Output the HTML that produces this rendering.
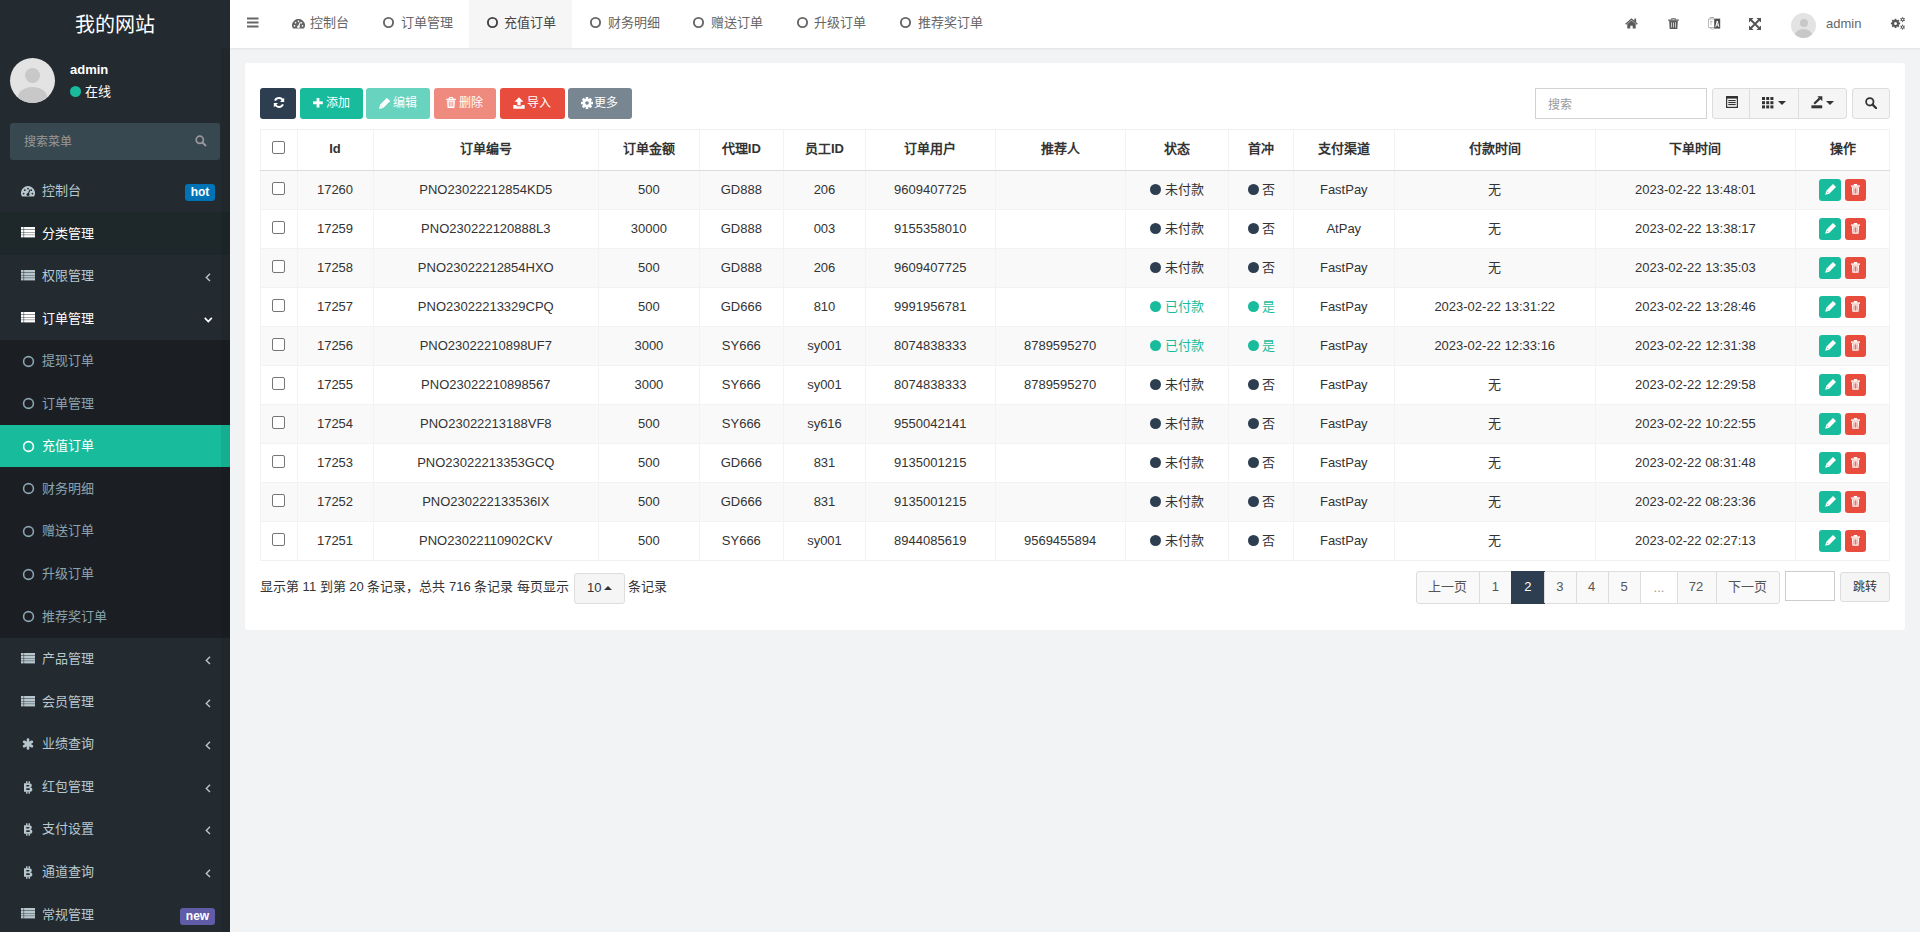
<!DOCTYPE html><html lang="zh-CN"><head><meta charset="utf-8"><style>
*{box-sizing:border-box;margin:0;padding:0}
html,body{width:1920px;height:932px;overflow:hidden}
body{background:#f2f3f5;font-family:"Liberation Sans",sans-serif;font-size:13px;color:#333;position:relative}
.abs{position:absolute}
#side{position:absolute;left:0;top:0;width:230px;height:932px;background:#232b31;overflow:hidden}
#logo{position:absolute;left:0;top:1.5px;width:230px;height:48px;color:#fff;font-size:20px;text-align:center;line-height:46px}
.mi{position:absolute;left:0;width:230px;height:42.56px;font-size:13px}
.mi .tx{position:absolute;left:42px;top:11.5px;line-height:20px;white-space:nowrap}
.badge{height:17px;border-radius:3px;color:#fff;font-size:12px;font-weight:bold;text-align:center;line-height:17px}
#hdr{position:absolute;left:230px;top:0;width:1690px;height:48px;background:#fff;box-shadow:0 1px 2px rgba(0,0,0,.08)}
#panel{position:absolute;left:245px;top:63px;width:1660px;height:567px;background:#fff;border-radius:3px}
.htx{position:absolute;top:14px;font-size:13px;color:#666;line-height:18px;white-space:nowrap}
.btn{position:absolute;top:88px;height:31px;border-radius:3px;color:#fff;font-size:13px;line-height:30px}
.bt{position:absolute;top:6px;line-height:18px;white-space:nowrap;font-size:12px;font-weight:500}
.gbtn{top:88px;height:31px;border:1px solid #ddd;background:#f5f5f5}
.th{position:absolute;top:139px;height:20px;line-height:20px;text-align:center;font-weight:bold;font-size:13px;color:#333;white-space:nowrap}
.td{position:absolute;height:39px;line-height:39px;text-align:center;font-size:13px;color:#333;white-space:nowrap}
.dot{width:11px;height:11px;border-radius:50%}
.ab{width:21.5px;height:21.6px;border-radius:3px}
.pgb{top:571px;height:32.5px;font-size:13px;color:#555;text-align:center;line-height:31px}

</style></head><body><div id="side"><div id="logo">我的网站</div><div class="abs" style="left:10px;top:58px;width:45px;height:45px;border-radius:50%;background:#e3e3e3;overflow:hidden"><div class="abs" style="left:15px;top:10px;width:15px;height:15px;border-radius:50%;background:#c8c8c8"></div><div class="abs" style="left:8px;top:29px;width:29px;height:20px;border-radius:50%;background:#c8c8c8"></div></div><div class="abs" style="left:70px;top:61.8px;font-size:13px;font-weight:bold;color:#fff;line-height:16px">admin</div><div class="abs" style="left:70px;top:86px;width:11px;height:11px;border-radius:50%;background:#18bc9c"></div><div class="abs" style="left:84.5px;top:83px;font-size:13px;color:#fff;line-height:18px">在线</div><div class="abs" style="left:10px;top:123px;width:210px;height:37px;border-radius:3px;background:#374850"></div><div class="abs" style="left:24px;top:133.3px;font-size:12px;color:#999;line-height:18px">搜索菜单</div><svg class="abs" style="left:195px;top:135px" width="12" height="12" viewBox="0 0 12 12"><circle cx="4.8" cy="4.8" r="3.6" fill="none" stroke="#999" stroke-width="1.7"/><path d="M7.5 7.5 L11 11" stroke="#999" stroke-width="2"/></svg><div class="mi" style="top:169.50px;background:transparent;color:#b8c7ce"><svg class="abs" style="left:21px;top:16.8px" width="14" height="11" viewBox="0 0 14 11"><path d="M0.94 10.5 A7 7 0 1 1 13.06 10.5 Z" fill="#b8c7ce"/><circle cx="7" cy="8.6" r="1.5" fill="#232b31"/><path d="M7 8.6 L9 3.6" stroke="#232b31" stroke-width="1.2"/><circle cx="2.6" cy="7.6" r="0.9" fill="#232b31"/><circle cx="11.4" cy="7.6" r="0.9" fill="#232b31"/><circle cx="3.8" cy="4.2" r="0.9" fill="#232b31"/><circle cx="7" cy="2.6" r="0.9" fill="#232b31"/><circle cx="10.2" cy="4.2" r="0.9" fill="#232b31"/></svg><div class="tx">控制台</div><div class="abs badge" style="left:185px;top:14.2px;width:30px;background:#0073b7">hot</div></div><div class="mi" style="top:212.06px;background:#1e272a;color:#fff"><svg class="abs" style="left:21px;top:15.3px" width="14" height="11" viewBox="0 0 14 11"><rect x="0" y="0.00" width="2.6" height="2.3" fill="#fff"/><rect x="3.1" y="0.00" width="10.9" height="2.3" fill="#fff"/><rect x="0" y="2.70" width="2.6" height="2.3" fill="#fff"/><rect x="3.1" y="2.70" width="10.9" height="2.3" fill="#fff"/><rect x="0" y="5.40" width="2.6" height="2.3" fill="#fff"/><rect x="3.1" y="5.40" width="10.9" height="2.3" fill="#fff"/><rect x="0" y="8.10" width="2.6" height="2.3" fill="#fff"/><rect x="3.1" y="8.10" width="10.9" height="2.3" fill="#fff"/></svg><div class="tx">分类管理</div></div><div class="mi" style="top:254.62px;background:transparent;color:#b8c7ce"><svg class="abs" style="left:21px;top:15.3px" width="14" height="11" viewBox="0 0 14 11"><rect x="0" y="0.00" width="2.6" height="2.3" fill="#b8c7ce"/><rect x="3.1" y="0.00" width="10.9" height="2.3" fill="#b8c7ce"/><rect x="0" y="2.70" width="2.6" height="2.3" fill="#b8c7ce"/><rect x="3.1" y="2.70" width="10.9" height="2.3" fill="#b8c7ce"/><rect x="0" y="5.40" width="2.6" height="2.3" fill="#b8c7ce"/><rect x="3.1" y="5.40" width="10.9" height="2.3" fill="#b8c7ce"/><rect x="0" y="8.10" width="2.6" height="2.3" fill="#b8c7ce"/><rect x="3.1" y="8.10" width="10.9" height="2.3" fill="#b8c7ce"/></svg><div class="tx">权限管理</div><svg class="abs" style="left:204.8px;top:18.5px" width="6" height="9"><path d="M5 0.8 L1.3 4.4 L5 8" fill="none" stroke="#b8c7ce" stroke-width="1.4"/></svg></div><div class="mi" style="top:297.18px;background:transparent;color:#fff"><svg class="abs" style="left:21px;top:15.3px" width="14" height="11" viewBox="0 0 14 11"><rect x="0" y="0.00" width="2.6" height="2.3" fill="#fff"/><rect x="3.1" y="0.00" width="10.9" height="2.3" fill="#fff"/><rect x="0" y="2.70" width="2.6" height="2.3" fill="#fff"/><rect x="3.1" y="2.70" width="10.9" height="2.3" fill="#fff"/><rect x="0" y="5.40" width="2.6" height="2.3" fill="#fff"/><rect x="3.1" y="5.40" width="10.9" height="2.3" fill="#fff"/><rect x="0" y="8.10" width="2.6" height="2.3" fill="#fff"/><rect x="3.1" y="8.10" width="10.9" height="2.3" fill="#fff"/></svg><div class="tx">订单管理</div><svg class="abs" style="left:203.5px;top:19.8px" width="9" height="6"><path d="M0.8 0.8 L4.3 4.5 L7.8 0.8" fill="none" stroke="#fff" stroke-width="1.7"/></svg></div><div class="mi" style="top:339.74px;background:#1b1f24;color:#8aa4af"><svg class="abs" style="left:21.6px;top:15.000000000000002px" width="13.0" height="13.0"><circle cx="6.5" cy="6.5" r="4.9" fill="none" stroke="#8aa4af" stroke-width="1.6"/></svg><div class="tx">提现订单</div></div><div class="mi" style="top:382.30px;background:#1b1f24;color:#8aa4af"><svg class="abs" style="left:21.6px;top:15.000000000000002px" width="13.0" height="13.0"><circle cx="6.5" cy="6.5" r="4.9" fill="none" stroke="#8aa4af" stroke-width="1.6"/></svg><div class="tx">订单管理</div></div><div class="mi" style="top:424.86px;background:#18bc9c;color:#fff"><svg class="abs" style="left:21.6px;top:15.000000000000002px" width="13.0" height="13.0"><circle cx="6.5" cy="6.5" r="4.9" fill="none" stroke="#fff" stroke-width="1.6"/></svg><div class="tx">充值订单</div></div><div class="mi" style="top:467.42px;background:#1b1f24;color:#8aa4af"><svg class="abs" style="left:21.6px;top:15.000000000000002px" width="13.0" height="13.0"><circle cx="6.5" cy="6.5" r="4.9" fill="none" stroke="#8aa4af" stroke-width="1.6"/></svg><div class="tx">财务明细</div></div><div class="mi" style="top:509.98px;background:#1b1f24;color:#8aa4af"><svg class="abs" style="left:21.6px;top:15.000000000000002px" width="13.0" height="13.0"><circle cx="6.5" cy="6.5" r="4.9" fill="none" stroke="#8aa4af" stroke-width="1.6"/></svg><div class="tx">赠送订单</div></div><div class="mi" style="top:552.54px;background:#1b1f24;color:#8aa4af"><svg class="abs" style="left:21.6px;top:15.000000000000002px" width="13.0" height="13.0"><circle cx="6.5" cy="6.5" r="4.9" fill="none" stroke="#8aa4af" stroke-width="1.6"/></svg><div class="tx">升级订单</div></div><div class="mi" style="top:595.10px;background:#1b1f24;color:#8aa4af"><svg class="abs" style="left:21.6px;top:15.000000000000002px" width="13.0" height="13.0"><circle cx="6.5" cy="6.5" r="4.9" fill="none" stroke="#8aa4af" stroke-width="1.6"/></svg><div class="tx">推荐奖订单</div></div><div class="mi" style="top:637.66px;background:transparent;color:#b8c7ce"><svg class="abs" style="left:21px;top:15.3px" width="14" height="11" viewBox="0 0 14 11"><rect x="0" y="0.00" width="2.6" height="2.3" fill="#b8c7ce"/><rect x="3.1" y="0.00" width="10.9" height="2.3" fill="#b8c7ce"/><rect x="0" y="2.70" width="2.6" height="2.3" fill="#b8c7ce"/><rect x="3.1" y="2.70" width="10.9" height="2.3" fill="#b8c7ce"/><rect x="0" y="5.40" width="2.6" height="2.3" fill="#b8c7ce"/><rect x="3.1" y="5.40" width="10.9" height="2.3" fill="#b8c7ce"/><rect x="0" y="8.10" width="2.6" height="2.3" fill="#b8c7ce"/><rect x="3.1" y="8.10" width="10.9" height="2.3" fill="#b8c7ce"/></svg><div class="tx">产品管理</div><svg class="abs" style="left:204.8px;top:18.5px" width="6" height="9"><path d="M5 0.8 L1.3 4.4 L5 8" fill="none" stroke="#b8c7ce" stroke-width="1.4"/></svg></div><div class="mi" style="top:680.22px;background:transparent;color:#b8c7ce"><svg class="abs" style="left:21px;top:15.3px" width="14" height="11" viewBox="0 0 14 11"><rect x="0" y="0.00" width="2.6" height="2.3" fill="#b8c7ce"/><rect x="3.1" y="0.00" width="10.9" height="2.3" fill="#b8c7ce"/><rect x="0" y="2.70" width="2.6" height="2.3" fill="#b8c7ce"/><rect x="3.1" y="2.70" width="10.9" height="2.3" fill="#b8c7ce"/><rect x="0" y="5.40" width="2.6" height="2.3" fill="#b8c7ce"/><rect x="3.1" y="5.40" width="10.9" height="2.3" fill="#b8c7ce"/><rect x="0" y="8.10" width="2.6" height="2.3" fill="#b8c7ce"/><rect x="3.1" y="8.10" width="10.9" height="2.3" fill="#b8c7ce"/></svg><div class="tx">会员管理</div><svg class="abs" style="left:204.8px;top:18.5px" width="6" height="9"><path d="M5 0.8 L1.3 4.4 L5 8" fill="none" stroke="#b8c7ce" stroke-width="1.4"/></svg></div><div class="mi" style="top:722.78px;background:transparent;color:#b8c7ce"><svg class="abs" style="left:22px;top:15px" width="12" height="12" viewBox="0 0 12 12"><g stroke="#b8c7ce" stroke-width="2.6" stroke-linecap="round"><path d="M6 1.5V10.5"/><path d="M2.1 3.75L9.9 8.25"/><path d="M2.1 8.25L9.9 3.75"/></g></svg><div class="tx">业绩查询</div><svg class="abs" style="left:204.8px;top:18.5px" width="6" height="9"><path d="M5 0.8 L1.3 4.4 L5 8" fill="none" stroke="#b8c7ce" stroke-width="1.4"/></svg></div><div class="mi" style="top:765.34px;background:transparent;color:#b8c7ce"><svg class="abs" style="left:23px;top:15.2px" width="10" height="13" viewBox="0 0 10 13"><path d="M1 2.2 H6 Q8.8 2.2 8.8 4.4 Q8.8 5.9 7.3 6.3 Q9.4 6.7 9.4 8.5 Q9.4 10.8 6.3 10.8 H1 Z M3.3 4 V5.6 H5.6 Q6.5 5.6 6.5 4.8 Q6.5 4 5.6 4 Z M3.3 7.2 V9 H5.9 Q7 9 7 8.1 Q7 7.2 5.9 7.2 Z" fill="#b8c7ce" fill-rule="evenodd"/><rect x="3" y="0.3" width="1.5" height="2.2" fill="#b8c7ce"/><rect x="5.5" y="0.3" width="1.5" height="2.2" fill="#b8c7ce"/><rect x="3" y="10.5" width="1.5" height="2.2" fill="#b8c7ce"/><rect x="5.5" y="10.5" width="1.5" height="2.2" fill="#b8c7ce"/></svg><div class="tx">红包管理</div><svg class="abs" style="left:204.8px;top:18.5px" width="6" height="9"><path d="M5 0.8 L1.3 4.4 L5 8" fill="none" stroke="#b8c7ce" stroke-width="1.4"/></svg></div><div class="mi" style="top:807.90px;background:transparent;color:#b8c7ce"><svg class="abs" style="left:23px;top:15.2px" width="10" height="13" viewBox="0 0 10 13"><path d="M1 2.2 H6 Q8.8 2.2 8.8 4.4 Q8.8 5.9 7.3 6.3 Q9.4 6.7 9.4 8.5 Q9.4 10.8 6.3 10.8 H1 Z M3.3 4 V5.6 H5.6 Q6.5 5.6 6.5 4.8 Q6.5 4 5.6 4 Z M3.3 7.2 V9 H5.9 Q7 9 7 8.1 Q7 7.2 5.9 7.2 Z" fill="#b8c7ce" fill-rule="evenodd"/><rect x="3" y="0.3" width="1.5" height="2.2" fill="#b8c7ce"/><rect x="5.5" y="0.3" width="1.5" height="2.2" fill="#b8c7ce"/><rect x="3" y="10.5" width="1.5" height="2.2" fill="#b8c7ce"/><rect x="5.5" y="10.5" width="1.5" height="2.2" fill="#b8c7ce"/></svg><div class="tx">支付设置</div><svg class="abs" style="left:204.8px;top:18.5px" width="6" height="9"><path d="M5 0.8 L1.3 4.4 L5 8" fill="none" stroke="#b8c7ce" stroke-width="1.4"/></svg></div><div class="mi" style="top:850.46px;background:transparent;color:#b8c7ce"><svg class="abs" style="left:23px;top:15.2px" width="10" height="13" viewBox="0 0 10 13"><path d="M1 2.2 H6 Q8.8 2.2 8.8 4.4 Q8.8 5.9 7.3 6.3 Q9.4 6.7 9.4 8.5 Q9.4 10.8 6.3 10.8 H1 Z M3.3 4 V5.6 H5.6 Q6.5 5.6 6.5 4.8 Q6.5 4 5.6 4 Z M3.3 7.2 V9 H5.9 Q7 9 7 8.1 Q7 7.2 5.9 7.2 Z" fill="#b8c7ce" fill-rule="evenodd"/><rect x="3" y="0.3" width="1.5" height="2.2" fill="#b8c7ce"/><rect x="5.5" y="0.3" width="1.5" height="2.2" fill="#b8c7ce"/><rect x="3" y="10.5" width="1.5" height="2.2" fill="#b8c7ce"/><rect x="5.5" y="10.5" width="1.5" height="2.2" fill="#b8c7ce"/></svg><div class="tx">通道查询</div><svg class="abs" style="left:204.8px;top:18.5px" width="6" height="9"><path d="M5 0.8 L1.3 4.4 L5 8" fill="none" stroke="#b8c7ce" stroke-width="1.4"/></svg></div><div class="mi" style="top:893.02px;background:transparent;color:#b8c7ce"><svg class="abs" style="left:21px;top:15.3px" width="14" height="11" viewBox="0 0 14 11"><rect x="0" y="0.00" width="2.6" height="2.3" fill="#b8c7ce"/><rect x="3.1" y="0.00" width="10.9" height="2.3" fill="#b8c7ce"/><rect x="0" y="2.70" width="2.6" height="2.3" fill="#b8c7ce"/><rect x="3.1" y="2.70" width="10.9" height="2.3" fill="#b8c7ce"/><rect x="0" y="5.40" width="2.6" height="2.3" fill="#b8c7ce"/><rect x="3.1" y="5.40" width="10.9" height="2.3" fill="#b8c7ce"/><rect x="0" y="8.10" width="2.6" height="2.3" fill="#b8c7ce"/><rect x="3.1" y="8.10" width="10.9" height="2.3" fill="#b8c7ce"/></svg><div class="tx">常规管理</div><div class="abs badge" style="left:180px;top:14.8px;width:35px;background:#605ca8">new</div></div><div class="abs" style="left:221px;top:48px;width:9px;height:884px;background:rgba(0,0,0,0.07)"></div></div><div id="hdr"></div><svg class="abs" style="left:247px;top:17px" width="12" height="11" viewBox="0 0 12 11"><rect y="0.5" width="11.5" height="2" fill="#666"/><rect y="4.5" width="11.5" height="2" fill="#666"/><rect y="8.5" width="11.5" height="2" fill="#666"/></svg><svg class="abs" style="left:292px;top:18.6px" width="13" height="10" viewBox="0 0 14 11"><path d="M0.94 10.5 A7 7 0 1 1 13.06 10.5 Z" fill="#666"/><circle cx="7" cy="8.6" r="1.5" fill="#fff"/><path d="M7 8.6 L9 3.6" stroke="#fff" stroke-width="1.2"/><circle cx="2.6" cy="7.6" r="0.9" fill="#fff"/><circle cx="11.4" cy="7.6" r="0.9" fill="#fff"/><circle cx="3.8" cy="4.2" r="0.9" fill="#fff"/><circle cx="7" cy="2.6" r="0.9" fill="#fff"/><circle cx="10.2" cy="4.2" r="0.9" fill="#fff"/></svg><div class="htx" style="left:310px">控制台</div><div class="abs" style="left:469px;top:0;width:103px;height:48px;background:#f6f6f6"></div><svg class="abs" style="left:382.0px;top:16.1px" width="13.0" height="13.0"><circle cx="6.5" cy="6.5" r="4.6" fill="none" stroke="#666" stroke-width="1.9"/></svg><div class="htx" style="left:400.5px;color:#666">订单管理</div><svg class="abs" style="left:485.5px;top:16.1px" width="13.0" height="13.0"><circle cx="6.5" cy="6.5" r="4.6" fill="none" stroke="#444" stroke-width="1.9"/></svg><div class="htx" style="left:504.0px;color:#444">充值订单</div><svg class="abs" style="left:589.0px;top:16.1px" width="13.0" height="13.0"><circle cx="6.5" cy="6.5" r="4.6" fill="none" stroke="#666" stroke-width="1.9"/></svg><div class="htx" style="left:607.5px;color:#666">财务明细</div><svg class="abs" style="left:692.3px;top:16.1px" width="13.0" height="13.0"><circle cx="6.5" cy="6.5" r="4.6" fill="none" stroke="#666" stroke-width="1.9"/></svg><div class="htx" style="left:710.8px;color:#666">赠送订单</div><svg class="abs" style="left:795.6px;top:16.1px" width="13.0" height="13.0"><circle cx="6.5" cy="6.5" r="4.6" fill="none" stroke="#666" stroke-width="1.9"/></svg><div class="htx" style="left:814.1px;color:#666">升级订单</div><svg class="abs" style="left:899.0px;top:16.1px" width="13.0" height="13.0"><circle cx="6.5" cy="6.5" r="4.6" fill="none" stroke="#666" stroke-width="1.9"/></svg><div class="htx" style="left:917.5px;color:#666">推荐奖订单</div><svg class="abs" style="left:1625px;top:17.8px" width="13" height="11" viewBox="0 0 13 11"><path d="M6.5 0.3 L12.8 5.8 L11.9 6.8 L6.5 2.1 L1.1 6.8 L0.2 5.8 Z" fill="#5a5a5a"/><path d="M2.3 6 L6.5 2.4 L10.7 6 V10.6 H7.7 V7.8 H5.3 V10.6 H2.3 Z" fill="#5a5a5a"/><rect x="9.3" y="0.6" width="1.8" height="3.4" fill="#5a5a5a"/></svg><svg class="abs" style="left:1668px;top:17.8px" width="11" height="11" viewBox="0 0 11 11"><path d="M3.6 1.6 V1 Q3.6 0.3 4.3 0.3 H6.7 Q7.4 0.3 7.4 1 V1.6" fill="none" stroke="#5a5a5a" stroke-width="1"/><rect x="0.2" y="1.5" width="10.6" height="1.3" fill="#5a5a5a"/><path d="M1.2 3 H9.8 L9.3 10.9 H1.7 Z" fill="#5a5a5a"/><g fill="#c9c9c9"><rect x="3" y="4.3" width="1" height="5.2"/><rect x="5" y="4.3" width="1" height="5.2"/><rect x="7" y="4.3" width="1" height="5.2"/></g></svg><svg class="abs" style="left:1708px;top:17px" width="13" height="13" viewBox="0 0 13 13"><path d="M0.5 2 H6.5 V10.5 H0.5 Z" fill="#fff" stroke="#aaa" stroke-width="0.8"/><path d="M1.5 1 L6 0.3" stroke="#888" stroke-width="0.8"/><path d="M2 4.5 H4.5 M3 3.8 V8" stroke="#aaa" stroke-width="0.7"/><path d="M2 11.2 Q4 12.6 6.5 11.8" fill="none" stroke="#aaa" stroke-width="0.8"/><path d="M6.3 1.6 H12.2 V11.6 H6.3 Z" fill="#4f4f4f"/><path d="M7.7 9.8 L9.25 4 L10.8 9.8 M8.3 8 H10.2" fill="none" stroke="#fff" stroke-width="1"/></svg><svg class="abs" style="left:1749.3px;top:17.8px" width="12" height="12" viewBox="0 0 12 12"><g fill="#555"><path d="M0 0 H4.6 L0 4.6 Z"/><path d="M12 0 V4.6 L7.4 0 Z"/><path d="M0 12 V7.4 L4.6 12 Z"/><path d="M12 12 H7.4 L12 7.4 Z"/></g><path d="M1.5 1.5 L10.5 10.5 M10.5 1.5 L1.5 10.5" stroke="#555" stroke-width="1.9"/></svg><div class="abs" style="left:1791px;top:13px;width:25px;height:25px;border-radius:50%;background:#e3e3e3;overflow:hidden"><div class="abs" style="left:8.5px;top:5.5px;width:8px;height:8px;border-radius:50%;background:#c8c8c8"></div><div class="abs" style="left:4px;top:16px;width:17px;height:12px;border-radius:50%;background:#c8c8c8"></div></div><div class="abs" style="left:1826px;top:15.5px;font-size:13px;color:#666;line-height:16px">admin</div><svg class="abs" style="left:1890px;top:16px" width="16" height="15" viewBox="0 0 16 15"><g transform="translate(5.5 7.4)" fill="#555"><circle r="3.3"/><rect x="-0.95" y="-4.6" width="1.9" height="9.2" transform="rotate(0.0)"/><rect x="-0.95" y="-4.6" width="1.9" height="9.2" transform="rotate(45.0)"/><rect x="-0.95" y="-4.6" width="1.9" height="9.2" transform="rotate(90.0)"/><rect x="-0.95" y="-4.6" width="1.9" height="9.2" transform="rotate(135.0)"/></g><circle cx="5.5" cy="7.4" r="1.5" fill="#fff"/><g transform="translate(12.6 3.6)" fill="#555"><circle r="1.7"/><rect x="-0.5" y="-2.5" width="1.0" height="5.0" transform="rotate(0.0)"/><rect x="-0.5" y="-2.5" width="1.0" height="5.0" transform="rotate(60.0)"/><rect x="-0.5" y="-2.5" width="1.0" height="5.0" transform="rotate(120.0)"/></g><circle cx="12.6" cy="3.6" r="0.8" fill="#fff"/><g transform="translate(12.6 11.1)" fill="#555"><circle r="1.7"/><rect x="-0.5" y="-2.5" width="1.0" height="5.0" transform="rotate(0.0)"/><rect x="-0.5" y="-2.5" width="1.0" height="5.0" transform="rotate(60.0)"/><rect x="-0.5" y="-2.5" width="1.0" height="5.0" transform="rotate(120.0)"/></g><circle cx="12.6" cy="11.1" r="0.8" fill="#fff"/></svg><div id="panel"></div><div class="btn" style="left:260px;width:36px;background:#2c3e50"><svg class="abs" style="left:12.8px;top:9px" width="12" height="11" viewBox="0 0 12 11"><path d="M10 4 A4.3 4.3 0 0 0 2 3.6" fill="none" stroke="#fff" stroke-width="2"/><path d="M11.2 0.8 V5 H7 Z" fill="#fff"/><path d="M2 7 A4.3 4.3 0 0 0 10 7.4" fill="none" stroke="#fff" stroke-width="2"/><path d="M0.8 10.2 V6 H5 Z" fill="#fff"/></svg></div><div class="btn" style="left:300px;width:63px;background:#18bc9c;opacity:1"><svg class="abs" style="left:13px;top:9.6px" width="10" height="10" viewBox="0 0 10 10"><rect x="3.6" y="0" width="2.8" height="9.5" fill="#fff"/><rect x="0" y="3.4" width="9.8" height="2.8" fill="#fff"/></svg><span class="bt" style="left:25.8px">添加</span></div><div class="btn" style="left:366px;width:64px;background:#18bc9c;opacity:0.65"><svg class="abs" style="left:12.6px;top:9.8px" width="11" height="11" viewBox="0 0 11 11"><path d="M7.9 -0.2 L11.2 3.1 L4.3 10 L0 11 L1 6.7 Z" fill="#fff"/><path d="M1.6 7.4 L3.6 9.4" stroke="#6fd3bf" stroke-width="0.6"/></svg><span class="bt" style="left:27px">编辑</span></div><div class="btn" style="left:434px;width:62px;background:#e74c3c;opacity:0.65"><svg class="abs" style="left:11.5px;top:9px" width="10" height="11" viewBox="0 0 10 11"><path d="M3.3 2 V1.3 Q3.3 0.4 4.2 0.4 H5.8 Q6.7 0.4 6.7 1.3 V2" fill="none" stroke="#fff" stroke-width="1.1"/><rect x="0.2" y="1.7" width="9.6" height="1.5" fill="#fff"/><path d="M1.1 3.6 H8.9 L8.4 10.9 H1.6 Z" fill="#fff"/><g fill="#e74c3c"><rect x="2.8" y="4.6" width="0.9" height="5"/><rect x="4.55" y="4.6" width="0.9" height="5"/><rect x="6.3" y="4.6" width="0.9" height="5"/></g></svg><span class="bt" style="left:25px">删除</span></div><div class="btn" style="left:500px;width:65px;background:#e74c3c;opacity:1"><svg class="abs" style="left:12.5px;top:9px" width="12" height="12" viewBox="0 0 12 12"><path d="M6 0.3 L10.5 4.8 H7.6 V8.3 H4.4 V4.8 H1.5 Z" fill="#fff"/><path d="M0.3 8 H3.5 V9.3 H8.5 V8 H11.7 V11.7 H0.3 Z" fill="#fff"/></svg><span class="bt" style="left:27px">导入</span></div><div class="btn" style="left:568px;width:64px;background:#788692;opacity:1"><svg class="abs" style="left:12.5px;top:9.3px" width="12" height="12" viewBox="-6 -6 12 12"><circle r="4.3" fill="#fff"/><g fill="#fff"><rect x="-1.3" y="-6" width="2.6" height="12"/><rect x="-1.3" y="-6" width="2.6" height="12" transform="rotate(45)"/><rect x="-1.3" y="-6" width="2.6" height="12" transform="rotate(90)"/><rect x="-1.3" y="-6" width="2.6" height="12" transform="rotate(135)"/></g><circle r="1.8" fill="#788692"/></svg><span class="bt" style="left:26px">更多</span></div><div class="abs" style="left:1535px;top:88px;width:172px;height:31px;border:1px solid #d2d2d2;background:#fff"></div><div class="abs" style="left:1548px;top:97px;font-size:12px;color:#999;line-height:16px">搜索</div><div class="abs gbtn" style="left:1712px;width:37.5px;border-radius:3px 0 0 3px"></div><div class="abs gbtn" style="left:1748.5px;width:50.5px;border-radius:0"></div><div class="abs gbtn" style="left:1798px;width:49px;border-radius:0 3px 3px 0"></div><div class="abs gbtn" style="left:1852px;width:37.5px;border-radius:3px"></div><svg class="abs" style="left:1726px;top:96px" width="12" height="12" viewBox="0 0 12 12"><rect x="0.6" y="0.6" width="10.8" height="10.8" fill="none" stroke="#333" stroke-width="1.2"/><rect x="0.6" y="0.6" width="10.8" height="2" fill="#333"/><g fill="#333"><rect x="2.3" y="4" width="7.4" height="1.1"/><rect x="2.3" y="6" width="7.4" height="1.1"/><rect x="2.3" y="8" width="7.4" height="1.1"/></g></svg><svg class="abs" style="left:1762px;top:97px" width="12" height="12" viewBox="0 0 12 12"><rect x="0.0" y="0.0" width="3" height="3" fill="#333"/><rect x="4.2" y="0.0" width="3" height="3" fill="#333"/><rect x="8.4" y="0.0" width="3" height="3" fill="#333"/><rect x="0.0" y="4.2" width="3" height="3" fill="#333"/><rect x="4.2" y="4.2" width="3" height="3" fill="#333"/><rect x="8.4" y="4.2" width="3" height="3" fill="#333"/><rect x="0.0" y="8.4" width="3" height="3" fill="#333"/><rect x="4.2" y="8.4" width="3" height="3" fill="#333"/><rect x="8.4" y="8.4" width="3" height="3" fill="#333"/></svg><svg class="abs" style="left:1778px;top:101px" width="8" height="4" viewBox="0 0 8 4"><path d="M0 0 H8 L4 4 Z" fill="#333"/></svg><svg class="abs" style="left:1810.5px;top:95.5px" width="12" height="13" viewBox="0 0 12 13"><rect x="0.4" y="9.3" width="10.8" height="3" fill="#333"/><path d="M11.3 0.3 V5.3 L6.3 0.3 Z" fill="#333"/><path d="M3.2 7.8 L8.8 2.4" stroke="#333" stroke-width="2.2"/></svg><svg class="abs" style="left:1826px;top:101px" width="8" height="4" viewBox="0 0 8 4"><path d="M0 0 H8 L4 4 Z" fill="#333"/></svg><svg class="abs" style="left:1865px;top:97px" width="12" height="12" viewBox="0 0 12 12"><circle cx="4.8" cy="4.8" r="3.7" fill="none" stroke="#333" stroke-width="1.8"/><path d="M7.6 7.6 L11.2 11.2" stroke="#333" stroke-width="2.2" stroke-linecap="round"/></svg><div class="abs" style="left:260px;top:170.2px;width:1630px;height:39px;background:#f9f9f9"></div><div class="abs" style="left:260px;top:209.2px;width:1630px;height:39px;background:#fff"></div><div class="abs" style="left:260px;top:248.2px;width:1630px;height:39px;background:#f9f9f9"></div><div class="abs" style="left:260px;top:287.2px;width:1630px;height:39px;background:#fff"></div><div class="abs" style="left:260px;top:326.2px;width:1630px;height:39px;background:#f9f9f9"></div><div class="abs" style="left:260px;top:365.2px;width:1630px;height:39px;background:#fff"></div><div class="abs" style="left:260px;top:404.2px;width:1630px;height:39px;background:#f9f9f9"></div><div class="abs" style="left:260px;top:443.2px;width:1630px;height:39px;background:#fff"></div><div class="abs" style="left:260px;top:482.2px;width:1630px;height:39px;background:#f9f9f9"></div><div class="abs" style="left:260px;top:521.2px;width:1630px;height:39px;background:#fff"></div><div class="abs" style="left:260px;top:129px;width:1630px;height:1px;background:#f0f0f0"></div><div class="abs" style="left:260px;top:209px;width:1630px;height:1px;background:#f2f2f2"></div><div class="abs" style="left:260px;top:248px;width:1630px;height:1px;background:#f2f2f2"></div><div class="abs" style="left:260px;top:287px;width:1630px;height:1px;background:#f2f2f2"></div><div class="abs" style="left:260px;top:326px;width:1630px;height:1px;background:#f2f2f2"></div><div class="abs" style="left:260px;top:365px;width:1630px;height:1px;background:#f2f2f2"></div><div class="abs" style="left:260px;top:404px;width:1630px;height:1px;background:#f2f2f2"></div><div class="abs" style="left:260px;top:443px;width:1630px;height:1px;background:#f2f2f2"></div><div class="abs" style="left:260px;top:482px;width:1630px;height:1px;background:#f2f2f2"></div><div class="abs" style="left:260px;top:521px;width:1630px;height:1px;background:#f2f2f2"></div><div class="abs" style="left:260px;top:560px;width:1630px;height:1px;background:#f2f2f2"></div><div class="abs" style="left:260px;top:129px;width:1px;height:431px;background:#f3f3f3"></div><div class="abs" style="left:297px;top:129px;width:1px;height:431px;background:#f3f3f3"></div><div class="abs" style="left:373px;top:129px;width:1px;height:431px;background:#f3f3f3"></div><div class="abs" style="left:598px;top:129px;width:1px;height:431px;background:#f3f3f3"></div><div class="abs" style="left:699px;top:129px;width:1px;height:431px;background:#f3f3f3"></div><div class="abs" style="left:783px;top:129px;width:1px;height:431px;background:#f3f3f3"></div><div class="abs" style="left:865px;top:129px;width:1px;height:431px;background:#f3f3f3"></div><div class="abs" style="left:995px;top:129px;width:1px;height:431px;background:#f3f3f3"></div><div class="abs" style="left:1125px;top:129px;width:1px;height:431px;background:#f3f3f3"></div><div class="abs" style="left:1228px;top:129px;width:1px;height:431px;background:#f3f3f3"></div><div class="abs" style="left:1293px;top:129px;width:1px;height:431px;background:#f3f3f3"></div><div class="abs" style="left:1394px;top:129px;width:1px;height:431px;background:#f3f3f3"></div><div class="abs" style="left:1595px;top:129px;width:1px;height:431px;background:#f3f3f3"></div><div class="abs" style="left:1795px;top:129px;width:1px;height:431px;background:#f3f3f3"></div><div class="abs" style="left:1889px;top:129px;width:1px;height:431px;background:#f3f3f3"></div><div class="abs" style="left:260px;top:170px;width:1630px;height:1px;background:#dcdcdc"></div><div class="th" style="left:297px;width:76px">Id</div><div class="th" style="left:373px;width:225.60000000000002px">订单编号</div><div class="th" style="left:598.6px;width:100.60000000000002px">订单金额</div><div class="th" style="left:699.2px;width:84.29999999999995px">代理ID</div><div class="th" style="left:783.5px;width:82.0px">员工ID</div><div class="th" style="left:865.5px;width:129.5px">订单用户</div><div class="th" style="left:995px;width:130.20000000000005px">推荐人</div><div class="th" style="left:1125.2px;width:103.29999999999995px">状态</div><div class="th" style="left:1228.5px;width:64.90000000000009px">首冲</div><div class="th" style="left:1293.4px;width:100.79999999999995px">支付渠道</div><div class="th" style="left:1394.2px;width:201.0999999999999px">付款时间</div><div class="th" style="left:1595.3px;width:200.20000000000005px">下单时间</div><div class="th" style="left:1795.5px;width:94.20000000000005px">操作</div><div class="abs" style="left:272px;top:141px;width:13px;height:13px;border:1px solid #767676;border-radius:2px;background:#fff"></div><div class="abs" style="left:272px;top:181.7px;width:13px;height:13px;border:1px solid #767676;border-radius:2px;background:#fff"></div><div class="td" style="left:297px;top:170.2px;width:76px">17260</div><div class="td" style="left:373px;top:170.2px;width:225.60000000000002px">PNO23022212854KD5</div><div class="td" style="left:598.6px;top:170.2px;width:100.60000000000002px">500</div><div class="td" style="left:699.2px;top:170.2px;width:84.29999999999995px">GD888</div><div class="td" style="left:783.5px;top:170.2px;width:82.0px">206</div><div class="td" style="left:865.5px;top:170.2px;width:129.5px">9609407725</div><div class="td" style="left:995px;top:170.2px;width:130.20000000000005px"></div><div class="abs dot" style="left:1150.4px;top:183.8px;background:#2c3e50"></div><div class="td" style="left:1165px;top:170.2px;width:60px;text-align:left;color:#333">未付款</div><div class="abs dot" style="left:1247.7px;top:183.8px;background:#2c3e50"></div><div class="td" style="left:1262.4px;top:170.2px;width:30px;text-align:left;color:#333">否</div><div class="td" style="left:1293.4px;top:170.2px;width:100.79999999999995px">FastPay</div><div class="td" style="left:1394.2px;top:170.2px;width:201.0999999999999px">无</div><div class="td" style="left:1595.3px;top:170.2px;width:200.20000000000005px">2023-02-22 13:48:01</div><div class="abs ab" style="left:1819.3px;top:179.2px;background:#18bc9c"><svg class="abs" style="left:5.5px;top:5.3px" width="11" height="11" viewBox="0 0 11 11"><path d="M8 0 L11 3 L4.3 9.7 L0.2 10.8 L1.3 6.7 Z" fill="#fff"/><path d="M1.9 7.6 L3.4 9.1" stroke="#18bc9c" stroke-width="0.7"/></svg></div><div class="abs ab" style="left:1845.2px;top:179.2px;width:20.5px;background:#e74c3c"><svg class="abs" style="left:5.8px;top:5.3px" width="9" height="11" viewBox="0 0 9 11"><rect x="0" y="1.4" width="9" height="1.4" fill="#fff"/><rect x="2.8" y="0" width="3.4" height="1.8" fill="#fff"/><path d="M0.9 3.2 H8.1 L7.6 10.8 H1.4 Z" fill="#fff"/><rect x="2.6" y="4.3" width="0.8" height="5.3" fill="#e74c3c"/><rect x="4.1" y="4.3" width="0.8" height="5.3" fill="#e74c3c"/><rect x="5.6" y="4.3" width="0.8" height="5.3" fill="#e74c3c"/></svg></div><div class="abs" style="left:272px;top:220.7px;width:13px;height:13px;border:1px solid #767676;border-radius:2px;background:#fff"></div><div class="td" style="left:297px;top:209.2px;width:76px">17259</div><div class="td" style="left:373px;top:209.2px;width:225.60000000000002px">PNO230222120888L3</div><div class="td" style="left:598.6px;top:209.2px;width:100.60000000000002px">30000</div><div class="td" style="left:699.2px;top:209.2px;width:84.29999999999995px">GD888</div><div class="td" style="left:783.5px;top:209.2px;width:82.0px">003</div><div class="td" style="left:865.5px;top:209.2px;width:129.5px">9155358010</div><div class="td" style="left:995px;top:209.2px;width:130.20000000000005px"></div><div class="abs dot" style="left:1150.4px;top:222.8px;background:#2c3e50"></div><div class="td" style="left:1165px;top:209.2px;width:60px;text-align:left;color:#333">未付款</div><div class="abs dot" style="left:1247.7px;top:222.8px;background:#2c3e50"></div><div class="td" style="left:1262.4px;top:209.2px;width:30px;text-align:left;color:#333">否</div><div class="td" style="left:1293.4px;top:209.2px;width:100.79999999999995px">AtPay</div><div class="td" style="left:1394.2px;top:209.2px;width:201.0999999999999px">无</div><div class="td" style="left:1595.3px;top:209.2px;width:200.20000000000005px">2023-02-22 13:38:17</div><div class="abs ab" style="left:1819.3px;top:218.2px;background:#18bc9c"><svg class="abs" style="left:5.5px;top:5.3px" width="11" height="11" viewBox="0 0 11 11"><path d="M8 0 L11 3 L4.3 9.7 L0.2 10.8 L1.3 6.7 Z" fill="#fff"/><path d="M1.9 7.6 L3.4 9.1" stroke="#18bc9c" stroke-width="0.7"/></svg></div><div class="abs ab" style="left:1845.2px;top:218.2px;width:20.5px;background:#e74c3c"><svg class="abs" style="left:5.8px;top:5.3px" width="9" height="11" viewBox="0 0 9 11"><rect x="0" y="1.4" width="9" height="1.4" fill="#fff"/><rect x="2.8" y="0" width="3.4" height="1.8" fill="#fff"/><path d="M0.9 3.2 H8.1 L7.6 10.8 H1.4 Z" fill="#fff"/><rect x="2.6" y="4.3" width="0.8" height="5.3" fill="#e74c3c"/><rect x="4.1" y="4.3" width="0.8" height="5.3" fill="#e74c3c"/><rect x="5.6" y="4.3" width="0.8" height="5.3" fill="#e74c3c"/></svg></div><div class="abs" style="left:272px;top:259.7px;width:13px;height:13px;border:1px solid #767676;border-radius:2px;background:#fff"></div><div class="td" style="left:297px;top:248.2px;width:76px">17258</div><div class="td" style="left:373px;top:248.2px;width:225.60000000000002px">PNO23022212854HXO</div><div class="td" style="left:598.6px;top:248.2px;width:100.60000000000002px">500</div><div class="td" style="left:699.2px;top:248.2px;width:84.29999999999995px">GD888</div><div class="td" style="left:783.5px;top:248.2px;width:82.0px">206</div><div class="td" style="left:865.5px;top:248.2px;width:129.5px">9609407725</div><div class="td" style="left:995px;top:248.2px;width:130.20000000000005px"></div><div class="abs dot" style="left:1150.4px;top:261.8px;background:#2c3e50"></div><div class="td" style="left:1165px;top:248.2px;width:60px;text-align:left;color:#333">未付款</div><div class="abs dot" style="left:1247.7px;top:261.8px;background:#2c3e50"></div><div class="td" style="left:1262.4px;top:248.2px;width:30px;text-align:left;color:#333">否</div><div class="td" style="left:1293.4px;top:248.2px;width:100.79999999999995px">FastPay</div><div class="td" style="left:1394.2px;top:248.2px;width:201.0999999999999px">无</div><div class="td" style="left:1595.3px;top:248.2px;width:200.20000000000005px">2023-02-22 13:35:03</div><div class="abs ab" style="left:1819.3px;top:257.2px;background:#18bc9c"><svg class="abs" style="left:5.5px;top:5.3px" width="11" height="11" viewBox="0 0 11 11"><path d="M8 0 L11 3 L4.3 9.7 L0.2 10.8 L1.3 6.7 Z" fill="#fff"/><path d="M1.9 7.6 L3.4 9.1" stroke="#18bc9c" stroke-width="0.7"/></svg></div><div class="abs ab" style="left:1845.2px;top:257.2px;width:20.5px;background:#e74c3c"><svg class="abs" style="left:5.8px;top:5.3px" width="9" height="11" viewBox="0 0 9 11"><rect x="0" y="1.4" width="9" height="1.4" fill="#fff"/><rect x="2.8" y="0" width="3.4" height="1.8" fill="#fff"/><path d="M0.9 3.2 H8.1 L7.6 10.8 H1.4 Z" fill="#fff"/><rect x="2.6" y="4.3" width="0.8" height="5.3" fill="#e74c3c"/><rect x="4.1" y="4.3" width="0.8" height="5.3" fill="#e74c3c"/><rect x="5.6" y="4.3" width="0.8" height="5.3" fill="#e74c3c"/></svg></div><div class="abs" style="left:272px;top:298.7px;width:13px;height:13px;border:1px solid #767676;border-radius:2px;background:#fff"></div><div class="td" style="left:297px;top:287.2px;width:76px">17257</div><div class="td" style="left:373px;top:287.2px;width:225.60000000000002px">PNO23022213329CPQ</div><div class="td" style="left:598.6px;top:287.2px;width:100.60000000000002px">500</div><div class="td" style="left:699.2px;top:287.2px;width:84.29999999999995px">GD666</div><div class="td" style="left:783.5px;top:287.2px;width:82.0px">810</div><div class="td" style="left:865.5px;top:287.2px;width:129.5px">9991956781</div><div class="td" style="left:995px;top:287.2px;width:130.20000000000005px"></div><div class="abs dot" style="left:1150.4px;top:300.8px;background:#18bc9c"></div><div class="td" style="left:1165px;top:287.2px;width:60px;text-align:left;color:#18bc9c">已付款</div><div class="abs dot" style="left:1247.7px;top:300.8px;background:#18bc9c"></div><div class="td" style="left:1262.4px;top:287.2px;width:30px;text-align:left;color:#18bc9c">是</div><div class="td" style="left:1293.4px;top:287.2px;width:100.79999999999995px">FastPay</div><div class="td" style="left:1394.2px;top:287.2px;width:201.0999999999999px">2023-02-22 13:31:22</div><div class="td" style="left:1595.3px;top:287.2px;width:200.20000000000005px">2023-02-22 13:28:46</div><div class="abs ab" style="left:1819.3px;top:296.2px;background:#18bc9c"><svg class="abs" style="left:5.5px;top:5.3px" width="11" height="11" viewBox="0 0 11 11"><path d="M8 0 L11 3 L4.3 9.7 L0.2 10.8 L1.3 6.7 Z" fill="#fff"/><path d="M1.9 7.6 L3.4 9.1" stroke="#18bc9c" stroke-width="0.7"/></svg></div><div class="abs ab" style="left:1845.2px;top:296.2px;width:20.5px;background:#e74c3c"><svg class="abs" style="left:5.8px;top:5.3px" width="9" height="11" viewBox="0 0 9 11"><rect x="0" y="1.4" width="9" height="1.4" fill="#fff"/><rect x="2.8" y="0" width="3.4" height="1.8" fill="#fff"/><path d="M0.9 3.2 H8.1 L7.6 10.8 H1.4 Z" fill="#fff"/><rect x="2.6" y="4.3" width="0.8" height="5.3" fill="#e74c3c"/><rect x="4.1" y="4.3" width="0.8" height="5.3" fill="#e74c3c"/><rect x="5.6" y="4.3" width="0.8" height="5.3" fill="#e74c3c"/></svg></div><div class="abs" style="left:272px;top:337.7px;width:13px;height:13px;border:1px solid #767676;border-radius:2px;background:#fff"></div><div class="td" style="left:297px;top:326.2px;width:76px">17256</div><div class="td" style="left:373px;top:326.2px;width:225.60000000000002px">PNO23022210898UF7</div><div class="td" style="left:598.6px;top:326.2px;width:100.60000000000002px">3000</div><div class="td" style="left:699.2px;top:326.2px;width:84.29999999999995px">SY666</div><div class="td" style="left:783.5px;top:326.2px;width:82.0px">sy001</div><div class="td" style="left:865.5px;top:326.2px;width:129.5px">8074838333</div><div class="td" style="left:995px;top:326.2px;width:130.20000000000005px">8789595270</div><div class="abs dot" style="left:1150.4px;top:339.8px;background:#18bc9c"></div><div class="td" style="left:1165px;top:326.2px;width:60px;text-align:left;color:#18bc9c">已付款</div><div class="abs dot" style="left:1247.7px;top:339.8px;background:#18bc9c"></div><div class="td" style="left:1262.4px;top:326.2px;width:30px;text-align:left;color:#18bc9c">是</div><div class="td" style="left:1293.4px;top:326.2px;width:100.79999999999995px">FastPay</div><div class="td" style="left:1394.2px;top:326.2px;width:201.0999999999999px">2023-02-22 12:33:16</div><div class="td" style="left:1595.3px;top:326.2px;width:200.20000000000005px">2023-02-22 12:31:38</div><div class="abs ab" style="left:1819.3px;top:335.2px;background:#18bc9c"><svg class="abs" style="left:5.5px;top:5.3px" width="11" height="11" viewBox="0 0 11 11"><path d="M8 0 L11 3 L4.3 9.7 L0.2 10.8 L1.3 6.7 Z" fill="#fff"/><path d="M1.9 7.6 L3.4 9.1" stroke="#18bc9c" stroke-width="0.7"/></svg></div><div class="abs ab" style="left:1845.2px;top:335.2px;width:20.5px;background:#e74c3c"><svg class="abs" style="left:5.8px;top:5.3px" width="9" height="11" viewBox="0 0 9 11"><rect x="0" y="1.4" width="9" height="1.4" fill="#fff"/><rect x="2.8" y="0" width="3.4" height="1.8" fill="#fff"/><path d="M0.9 3.2 H8.1 L7.6 10.8 H1.4 Z" fill="#fff"/><rect x="2.6" y="4.3" width="0.8" height="5.3" fill="#e74c3c"/><rect x="4.1" y="4.3" width="0.8" height="5.3" fill="#e74c3c"/><rect x="5.6" y="4.3" width="0.8" height="5.3" fill="#e74c3c"/></svg></div><div class="abs" style="left:272px;top:376.7px;width:13px;height:13px;border:1px solid #767676;border-radius:2px;background:#fff"></div><div class="td" style="left:297px;top:365.2px;width:76px">17255</div><div class="td" style="left:373px;top:365.2px;width:225.60000000000002px">PNO23022210898567</div><div class="td" style="left:598.6px;top:365.2px;width:100.60000000000002px">3000</div><div class="td" style="left:699.2px;top:365.2px;width:84.29999999999995px">SY666</div><div class="td" style="left:783.5px;top:365.2px;width:82.0px">sy001</div><div class="td" style="left:865.5px;top:365.2px;width:129.5px">8074838333</div><div class="td" style="left:995px;top:365.2px;width:130.20000000000005px">8789595270</div><div class="abs dot" style="left:1150.4px;top:378.8px;background:#2c3e50"></div><div class="td" style="left:1165px;top:365.2px;width:60px;text-align:left;color:#333">未付款</div><div class="abs dot" style="left:1247.7px;top:378.8px;background:#2c3e50"></div><div class="td" style="left:1262.4px;top:365.2px;width:30px;text-align:left;color:#333">否</div><div class="td" style="left:1293.4px;top:365.2px;width:100.79999999999995px">FastPay</div><div class="td" style="left:1394.2px;top:365.2px;width:201.0999999999999px">无</div><div class="td" style="left:1595.3px;top:365.2px;width:200.20000000000005px">2023-02-22 12:29:58</div><div class="abs ab" style="left:1819.3px;top:374.2px;background:#18bc9c"><svg class="abs" style="left:5.5px;top:5.3px" width="11" height="11" viewBox="0 0 11 11"><path d="M8 0 L11 3 L4.3 9.7 L0.2 10.8 L1.3 6.7 Z" fill="#fff"/><path d="M1.9 7.6 L3.4 9.1" stroke="#18bc9c" stroke-width="0.7"/></svg></div><div class="abs ab" style="left:1845.2px;top:374.2px;width:20.5px;background:#e74c3c"><svg class="abs" style="left:5.8px;top:5.3px" width="9" height="11" viewBox="0 0 9 11"><rect x="0" y="1.4" width="9" height="1.4" fill="#fff"/><rect x="2.8" y="0" width="3.4" height="1.8" fill="#fff"/><path d="M0.9 3.2 H8.1 L7.6 10.8 H1.4 Z" fill="#fff"/><rect x="2.6" y="4.3" width="0.8" height="5.3" fill="#e74c3c"/><rect x="4.1" y="4.3" width="0.8" height="5.3" fill="#e74c3c"/><rect x="5.6" y="4.3" width="0.8" height="5.3" fill="#e74c3c"/></svg></div><div class="abs" style="left:272px;top:415.7px;width:13px;height:13px;border:1px solid #767676;border-radius:2px;background:#fff"></div><div class="td" style="left:297px;top:404.2px;width:76px">17254</div><div class="td" style="left:373px;top:404.2px;width:225.60000000000002px">PNO23022213188VF8</div><div class="td" style="left:598.6px;top:404.2px;width:100.60000000000002px">500</div><div class="td" style="left:699.2px;top:404.2px;width:84.29999999999995px">SY666</div><div class="td" style="left:783.5px;top:404.2px;width:82.0px">sy616</div><div class="td" style="left:865.5px;top:404.2px;width:129.5px">9550042141</div><div class="td" style="left:995px;top:404.2px;width:130.20000000000005px"></div><div class="abs dot" style="left:1150.4px;top:417.8px;background:#2c3e50"></div><div class="td" style="left:1165px;top:404.2px;width:60px;text-align:left;color:#333">未付款</div><div class="abs dot" style="left:1247.7px;top:417.8px;background:#2c3e50"></div><div class="td" style="left:1262.4px;top:404.2px;width:30px;text-align:left;color:#333">否</div><div class="td" style="left:1293.4px;top:404.2px;width:100.79999999999995px">FastPay</div><div class="td" style="left:1394.2px;top:404.2px;width:201.0999999999999px">无</div><div class="td" style="left:1595.3px;top:404.2px;width:200.20000000000005px">2023-02-22 10:22:55</div><div class="abs ab" style="left:1819.3px;top:413.2px;background:#18bc9c"><svg class="abs" style="left:5.5px;top:5.3px" width="11" height="11" viewBox="0 0 11 11"><path d="M8 0 L11 3 L4.3 9.7 L0.2 10.8 L1.3 6.7 Z" fill="#fff"/><path d="M1.9 7.6 L3.4 9.1" stroke="#18bc9c" stroke-width="0.7"/></svg></div><div class="abs ab" style="left:1845.2px;top:413.2px;width:20.5px;background:#e74c3c"><svg class="abs" style="left:5.8px;top:5.3px" width="9" height="11" viewBox="0 0 9 11"><rect x="0" y="1.4" width="9" height="1.4" fill="#fff"/><rect x="2.8" y="0" width="3.4" height="1.8" fill="#fff"/><path d="M0.9 3.2 H8.1 L7.6 10.8 H1.4 Z" fill="#fff"/><rect x="2.6" y="4.3" width="0.8" height="5.3" fill="#e74c3c"/><rect x="4.1" y="4.3" width="0.8" height="5.3" fill="#e74c3c"/><rect x="5.6" y="4.3" width="0.8" height="5.3" fill="#e74c3c"/></svg></div><div class="abs" style="left:272px;top:454.7px;width:13px;height:13px;border:1px solid #767676;border-radius:2px;background:#fff"></div><div class="td" style="left:297px;top:443.2px;width:76px">17253</div><div class="td" style="left:373px;top:443.2px;width:225.60000000000002px">PNO23022213353GCQ</div><div class="td" style="left:598.6px;top:443.2px;width:100.60000000000002px">500</div><div class="td" style="left:699.2px;top:443.2px;width:84.29999999999995px">GD666</div><div class="td" style="left:783.5px;top:443.2px;width:82.0px">831</div><div class="td" style="left:865.5px;top:443.2px;width:129.5px">9135001215</div><div class="td" style="left:995px;top:443.2px;width:130.20000000000005px"></div><div class="abs dot" style="left:1150.4px;top:456.8px;background:#2c3e50"></div><div class="td" style="left:1165px;top:443.2px;width:60px;text-align:left;color:#333">未付款</div><div class="abs dot" style="left:1247.7px;top:456.8px;background:#2c3e50"></div><div class="td" style="left:1262.4px;top:443.2px;width:30px;text-align:left;color:#333">否</div><div class="td" style="left:1293.4px;top:443.2px;width:100.79999999999995px">FastPay</div><div class="td" style="left:1394.2px;top:443.2px;width:201.0999999999999px">无</div><div class="td" style="left:1595.3px;top:443.2px;width:200.20000000000005px">2023-02-22 08:31:48</div><div class="abs ab" style="left:1819.3px;top:452.2px;background:#18bc9c"><svg class="abs" style="left:5.5px;top:5.3px" width="11" height="11" viewBox="0 0 11 11"><path d="M8 0 L11 3 L4.3 9.7 L0.2 10.8 L1.3 6.7 Z" fill="#fff"/><path d="M1.9 7.6 L3.4 9.1" stroke="#18bc9c" stroke-width="0.7"/></svg></div><div class="abs ab" style="left:1845.2px;top:452.2px;width:20.5px;background:#e74c3c"><svg class="abs" style="left:5.8px;top:5.3px" width="9" height="11" viewBox="0 0 9 11"><rect x="0" y="1.4" width="9" height="1.4" fill="#fff"/><rect x="2.8" y="0" width="3.4" height="1.8" fill="#fff"/><path d="M0.9 3.2 H8.1 L7.6 10.8 H1.4 Z" fill="#fff"/><rect x="2.6" y="4.3" width="0.8" height="5.3" fill="#e74c3c"/><rect x="4.1" y="4.3" width="0.8" height="5.3" fill="#e74c3c"/><rect x="5.6" y="4.3" width="0.8" height="5.3" fill="#e74c3c"/></svg></div><div class="abs" style="left:272px;top:493.7px;width:13px;height:13px;border:1px solid #767676;border-radius:2px;background:#fff"></div><div class="td" style="left:297px;top:482.2px;width:76px">17252</div><div class="td" style="left:373px;top:482.2px;width:225.60000000000002px">PNO230222133536IX</div><div class="td" style="left:598.6px;top:482.2px;width:100.60000000000002px">500</div><div class="td" style="left:699.2px;top:482.2px;width:84.29999999999995px">GD666</div><div class="td" style="left:783.5px;top:482.2px;width:82.0px">831</div><div class="td" style="left:865.5px;top:482.2px;width:129.5px">9135001215</div><div class="td" style="left:995px;top:482.2px;width:130.20000000000005px"></div><div class="abs dot" style="left:1150.4px;top:495.8px;background:#2c3e50"></div><div class="td" style="left:1165px;top:482.2px;width:60px;text-align:left;color:#333">未付款</div><div class="abs dot" style="left:1247.7px;top:495.8px;background:#2c3e50"></div><div class="td" style="left:1262.4px;top:482.2px;width:30px;text-align:left;color:#333">否</div><div class="td" style="left:1293.4px;top:482.2px;width:100.79999999999995px">FastPay</div><div class="td" style="left:1394.2px;top:482.2px;width:201.0999999999999px">无</div><div class="td" style="left:1595.3px;top:482.2px;width:200.20000000000005px">2023-02-22 08:23:36</div><div class="abs ab" style="left:1819.3px;top:491.2px;background:#18bc9c"><svg class="abs" style="left:5.5px;top:5.3px" width="11" height="11" viewBox="0 0 11 11"><path d="M8 0 L11 3 L4.3 9.7 L0.2 10.8 L1.3 6.7 Z" fill="#fff"/><path d="M1.9 7.6 L3.4 9.1" stroke="#18bc9c" stroke-width="0.7"/></svg></div><div class="abs ab" style="left:1845.2px;top:491.2px;width:20.5px;background:#e74c3c"><svg class="abs" style="left:5.8px;top:5.3px" width="9" height="11" viewBox="0 0 9 11"><rect x="0" y="1.4" width="9" height="1.4" fill="#fff"/><rect x="2.8" y="0" width="3.4" height="1.8" fill="#fff"/><path d="M0.9 3.2 H8.1 L7.6 10.8 H1.4 Z" fill="#fff"/><rect x="2.6" y="4.3" width="0.8" height="5.3" fill="#e74c3c"/><rect x="4.1" y="4.3" width="0.8" height="5.3" fill="#e74c3c"/><rect x="5.6" y="4.3" width="0.8" height="5.3" fill="#e74c3c"/></svg></div><div class="abs" style="left:272px;top:532.7px;width:13px;height:13px;border:1px solid #767676;border-radius:2px;background:#fff"></div><div class="td" style="left:297px;top:521.2px;width:76px">17251</div><div class="td" style="left:373px;top:521.2px;width:225.60000000000002px">PNO23022110902CKV</div><div class="td" style="left:598.6px;top:521.2px;width:100.60000000000002px">500</div><div class="td" style="left:699.2px;top:521.2px;width:84.29999999999995px">SY666</div><div class="td" style="left:783.5px;top:521.2px;width:82.0px">sy001</div><div class="td" style="left:865.5px;top:521.2px;width:129.5px">8944085619</div><div class="td" style="left:995px;top:521.2px;width:130.20000000000005px">9569455894</div><div class="abs dot" style="left:1150.4px;top:534.8px;background:#2c3e50"></div><div class="td" style="left:1165px;top:521.2px;width:60px;text-align:left;color:#333">未付款</div><div class="abs dot" style="left:1247.7px;top:534.8px;background:#2c3e50"></div><div class="td" style="left:1262.4px;top:521.2px;width:30px;text-align:left;color:#333">否</div><div class="td" style="left:1293.4px;top:521.2px;width:100.79999999999995px">FastPay</div><div class="td" style="left:1394.2px;top:521.2px;width:201.0999999999999px">无</div><div class="td" style="left:1595.3px;top:521.2px;width:200.20000000000005px">2023-02-22 02:27:13</div><div class="abs ab" style="left:1819.3px;top:530.2px;background:#18bc9c"><svg class="abs" style="left:5.5px;top:5.3px" width="11" height="11" viewBox="0 0 11 11"><path d="M8 0 L11 3 L4.3 9.7 L0.2 10.8 L1.3 6.7 Z" fill="#fff"/><path d="M1.9 7.6 L3.4 9.1" stroke="#18bc9c" stroke-width="0.7"/></svg></div><div class="abs ab" style="left:1845.2px;top:530.2px;width:20.5px;background:#e74c3c"><svg class="abs" style="left:5.8px;top:5.3px" width="9" height="11" viewBox="0 0 9 11"><rect x="0" y="1.4" width="9" height="1.4" fill="#fff"/><rect x="2.8" y="0" width="3.4" height="1.8" fill="#fff"/><path d="M0.9 3.2 H8.1 L7.6 10.8 H1.4 Z" fill="#fff"/><rect x="2.6" y="4.3" width="0.8" height="5.3" fill="#e74c3c"/><rect x="4.1" y="4.3" width="0.8" height="5.3" fill="#e74c3c"/><rect x="5.6" y="4.3" width="0.8" height="5.3" fill="#e74c3c"/></svg></div><div class="abs" style="left:260px;top:579px;font-size:13px;color:#333;line-height:16px;white-space:nowrap">显示第 11 到第 20 条记录，总共 716 条记录 每页显示</div><div class="abs" style="left:574px;top:573px;width:50.5px;height:31px;border:1px solid #ddd;border-radius:3px;background:#f5f5f5"></div><div class="abs" style="left:587px;top:580px;font-size:13px;color:#333;line-height:16px">10</div><svg class="abs" style="left:604px;top:586px" width="8" height="4" viewBox="0 0 8 4"><path d="M0 4 H8 L4 0 Z" fill="#333"/></svg><div class="abs" style="left:628px;top:579px;font-size:13px;color:#333;line-height:16px">条记录</div><div class="abs" style="left:1415.5px;top:571px;width:364px;height:32.5px;border:1px solid #ddd;border-radius:3px;background:#f9f9f9"></div><div class="abs pgb" style="left:1415.5px;width:63.9px">上一页</div><div class="abs" style="left:1479.4px;top:572px;width:1px;height:30.5px;background:#ddd"></div><div class="abs pgb" style="left:1479.4px;width:31.8px">1</div><div class="abs pgb" style="left:1511.2px;width:33.5px;background:#2c3e50;color:#fff;border:0">2</div><div class="abs" style="left:1543.75px;top:572px;width:1px;height:30.5px;background:#ddd"></div><div class="abs pgb" style="left:1543.75px;width:32.0px">3</div><div class="abs" style="left:1575.8px;top:572px;width:1px;height:30.5px;background:#ddd"></div><div class="abs pgb" style="left:1575.8px;width:31.8px">4</div><div class="abs" style="left:1607.55px;top:572px;width:1px;height:30.5px;background:#ddd"></div><div class="abs pgb" style="left:1607.55px;width:32.9px">5</div><div class="abs pgb" style="left:1640.4px;width:36.2px;background:#fff;color:#999;top:572px;height:30.5px;border-left:1px solid #ddd">...</div><div class="abs" style="left:1676.6px;top:572px;width:1px;height:30.5px;background:#ddd"></div><div class="abs pgb" style="left:1676.6px;width:39.0px">72</div><div class="abs" style="left:1715.6px;top:572px;width:1px;height:30.5px;background:#ddd"></div><div class="abs pgb" style="left:1715.6px;width:63.9px">下一页</div><div class="abs" style="left:1785px;top:571px;width:50px;height:30px;border:1px solid #ccc;background:#fff"></div><div class="abs" style="left:1840px;top:571.7px;width:49.6px;height:30.5px;border:1px solid #ddd;border-radius:3px;background:#f5f5f5;font-size:12px;color:#333;text-align:center;line-height:28.5px">跳转</div></body></html>
